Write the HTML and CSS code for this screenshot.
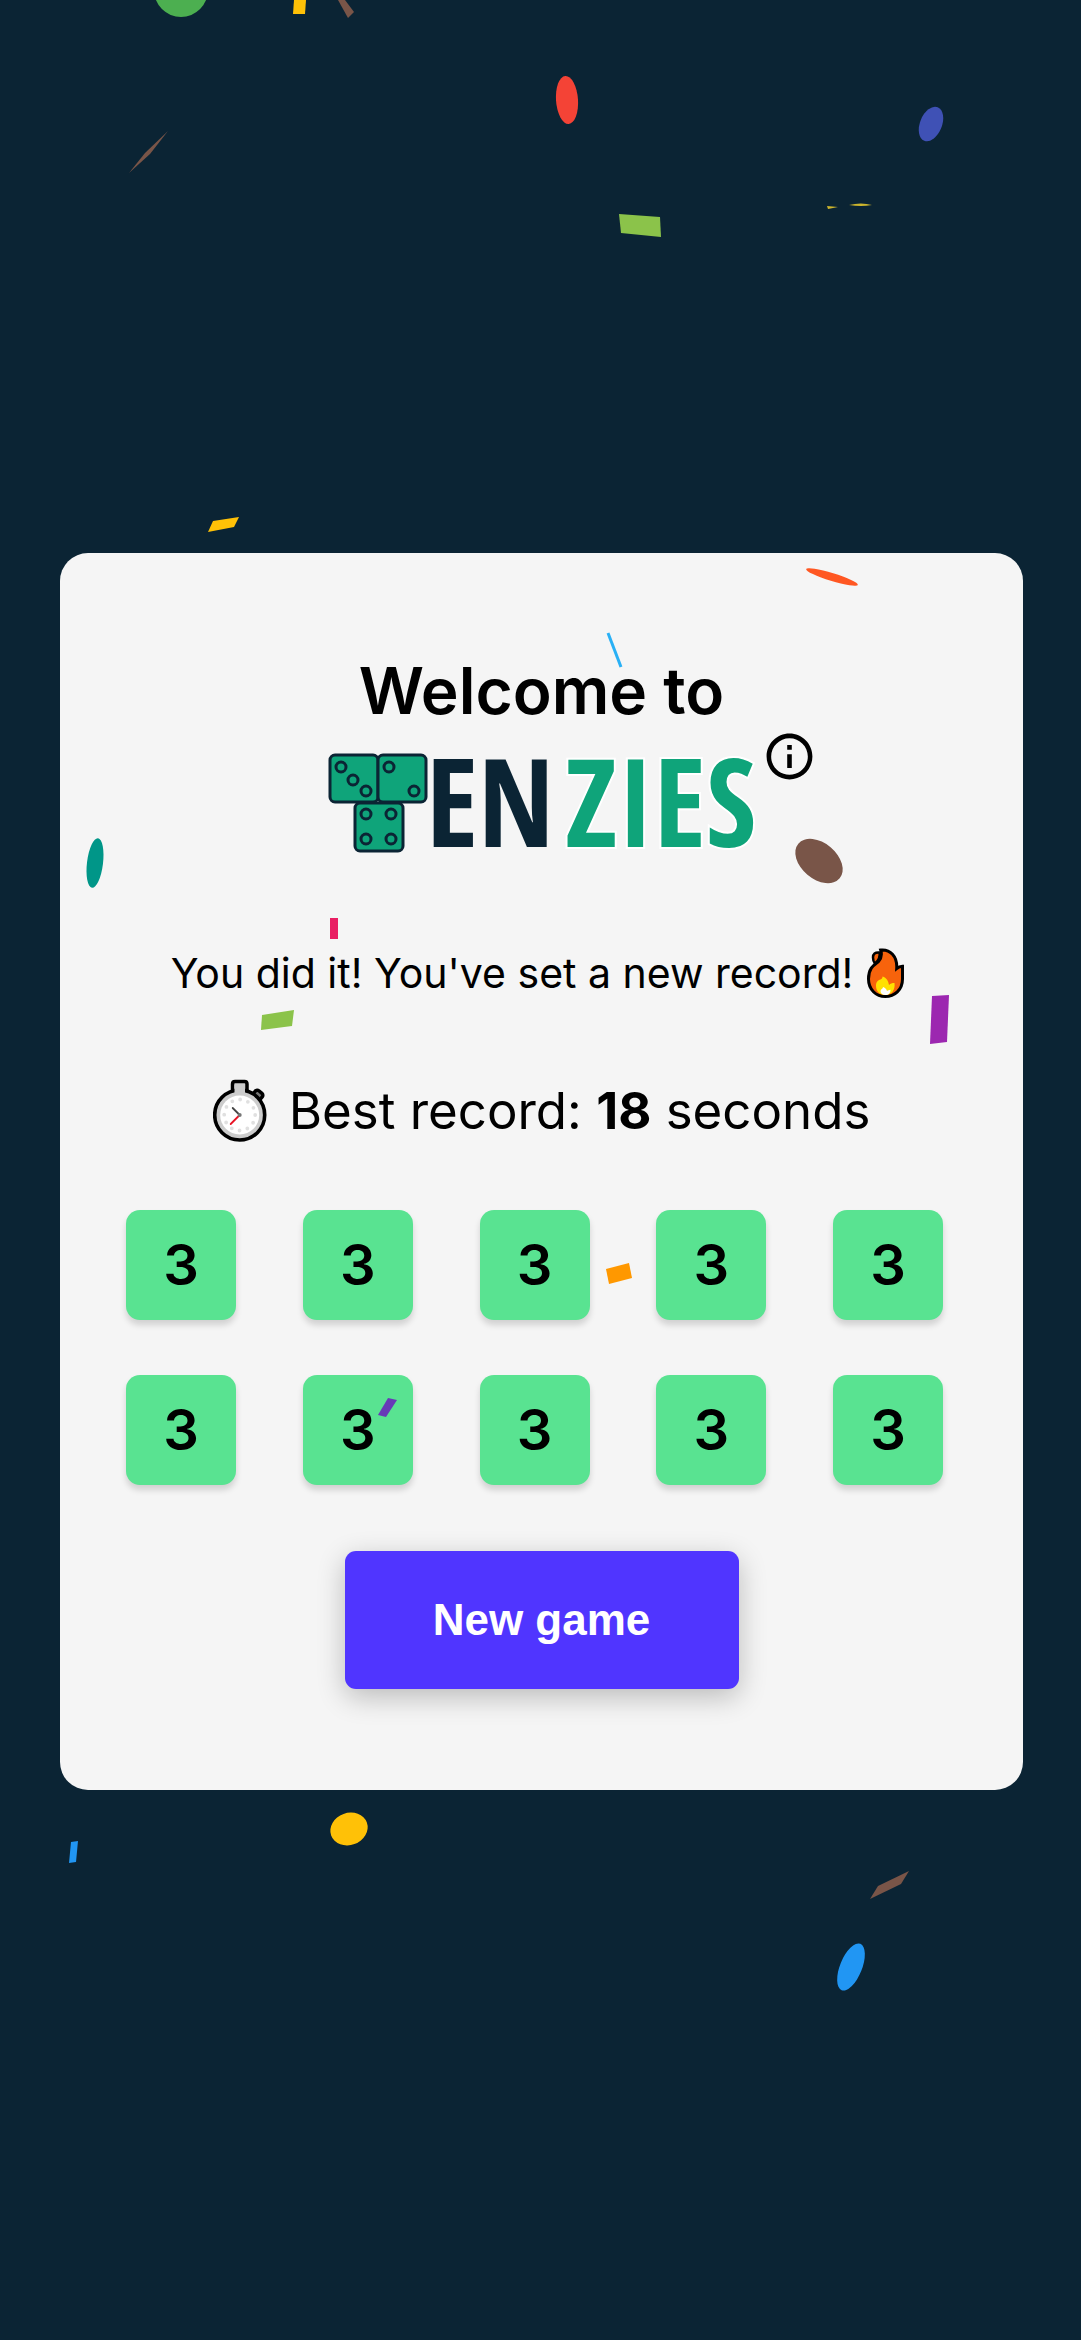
FILE: index.html
```
<!DOCTYPE html>
<html lang="en">
<head>
  <meta charset="utf-8">
  <meta name="viewport" content="width=device-width, initial-scale=1">
  <title>Tenzies</title>
  <link rel="stylesheet" href="styles.css">
</head>
<body>
  <main class="card">
    <h1 class="title">Welcome to</h1>

    <div class="brand">
      <svg class="logo" viewBox="0 0 428 102" role="img" aria-label="Tenzies">
        <g class="die">
          <rect x="2" y="3" width="48" height="47" rx="5"/>
          <rect x="50" y="3" width="48" height="47" rx="5"/>
          <rect x="27" y="51" width="48" height="48" rx="5"/>
          <circle cx="13" cy="15" r="5"/>
          <circle cx="25" cy="28" r="5"/>
          <circle cx="38" cy="39" r="5"/>
          <circle cx="61" cy="15" r="5"/>
          <circle cx="86" cy="39" r="5"/>
          <circle cx="38" cy="62" r="5"/>
          <circle cx="63" cy="62" r="5"/>
          <circle cx="38" cy="87" r="5"/>
          <circle cx="63" cy="87" r="5"/>
        </g>
        <text class="word word-dark" x="98" y="95">EN</text>
        <text class="word word-green" x="237" y="95">ZIES</text>
      </svg>
      <button class="info" type="button" aria-label="How to play">
        <svg class="info-icon" viewBox="0 0 24 24" aria-hidden="true">
          <path d="M11 7h2v2h-2zm0 4h2v6h-2zm1-9C6.480 2 2 6.480 2 12s4.480 10 10 10 10-4.480 10-10S17.520 2 12 2zm0 18c-4.410 0-8-3.590-8-8s3.590-8 8-8 8 3.590 8 8-3.590 8-8 8z"/>
        </svg>
      </button>
    </div>

    <p class="message">
      <span>You did it! You've set a new record!</span>
      <svg class="flame" viewBox="0 0 37 50" aria-hidden="true">
        <path d="M13.700 2C23 1 30.500 8 29.700 20.500c2-1.500 3.500-2 5.800-2.200V31c0 11-8 17.500-17.200 17.500S1.500 41.500 1.500 31C1.500 20 7 17 11.500 13.500 14.500 10 15 6 13.700 2z" fill="#f7630c" stroke="#000" stroke-width="3"/>
        <path d="M12.500 4.500C8 4 6 6 6 9.500c0 3 .5 4.500 2 6 3-2.500 5.500-6 4.500-11z" fill="#f7630c" stroke="#000" stroke-width="2.500"/>
        <path d="M15.500 28.500c4 1 6 5 6.500 8.500 1.500-1.500 3-2 5.500-2 1 7-3 12-9 12s-9.500-4-9.500-9c0-4 2-6 4.500-6.500 1.500-.8 2-1.500 2-3z" fill="#ffe100"/>
        <path d="M16 39c2.500.5 3.500 2.500 4 4 1-.8 2-1.200 3.500-1.300 0 3.300-2 5.300-5 5.300s-5-1.500-5-4c0-2 2.500-2 2.500-4z" fill="#fff"/>
      </svg>
    </p>

    <p class="record">
      <svg class="stopwatch" viewBox="0 0 54 64" aria-hidden="true">
        <path d="M19.500 14V5q0-2.500 2.500-2.500h9.500Q34 2.500 34 5v9z" fill="#ccc" stroke="#000" stroke-width="3.500"/>
        <rect x="40" y="12" width="9" height="9" rx="2.500" transform="rotate(40 44.500 16.500)" fill="#767676" stroke="#000" stroke-width="3.500"/>
        <circle cx="26.700" cy="36" r="25" fill="#ccc" stroke="#000" stroke-width="3.600"/>
        <path d="M21.500 6h10.500v8H21.500z" fill="#ccc"/>
        <circle cx="26.700" cy="36" r="19.500" fill="#fff"/>
        <circle cx="26.700" cy="36" r="15.500" fill="none" stroke="#e0e0e0" stroke-width="3.800" stroke-linecap="round" stroke-dasharray="0 8.115"/>
        <path d="M26.700 36l-7-7" stroke="#444" stroke-width="1.800" stroke-linecap="round"/>
        <path d="M26.700 36l-9 9" stroke="#e81224" stroke-width="1.800" stroke-linecap="round"/>
        <circle cx="26.700" cy="36" r="2" fill="#767676"/>
      </svg>
      <span>Best record: <b>18</b> seconds</span>
    </p>

    <div class="dice">
      <button class="tile" type="button">3</button>
      <button class="tile" type="button">3</button>
      <button class="tile" type="button">3</button>
      <button class="tile" type="button">3</button>
      <button class="tile" type="button">3</button>
      <button class="tile" type="button">3</button>
      <button class="tile" type="button">3</button>
      <button class="tile" type="button">3</button>
      <button class="tile" type="button">3</button>
      <button class="tile" type="button">3</button>
    </div>

    <button class="new-game" type="button">New game</button>
  </main>

  <svg class="confetti" aria-hidden="true">
    <circle cx="181" cy="-10" r="27" fill="#4caf50"/>
    <path d="M294 0h12l-1 14h-12z" fill="#ffc107"/>
    <path d="M338 0h7l9 12-6 6z" fill="#795548"/>
    <path d="M129 173l16-20 23-22-18 23z" fill="#795548"/>
    <ellipse cx="567" cy="100" rx="11" ry="24" transform="rotate(-4 567 100)" fill="#f44336"/>
    <ellipse cx="931" cy="124" rx="11" ry="18" transform="rotate(22 931 124)" fill="#3f51b5"/>
    <path d="M619 214l41 3 1 20-40-4z" fill="#8bc34a"/>
    <path d="M827 206l11 1-10 2zM849 205q12-3 23 0-11 2-23 0z" fill="#cdb52d"/>
    <path d="M208 532l5-11 26-4-5 10z" fill="#ffc107"/>
    <ellipse cx="832" cy="577" rx="27" ry="4" transform="rotate(17 832 577)" fill="#ff5722"/>
    <path d="M608 633l13 34" stroke="#29b0f5" stroke-width="3"/>
    <ellipse cx="95" cy="863" rx="8" ry="25" transform="rotate(7 95 863)" fill="#009688"/>
    <ellipse cx="819" cy="861" rx="27" ry="18" transform="rotate(40 819 861)" fill="#795548"/>
    <path d="M330 918h8v21h-8z" fill="#e91e63"/>
    <path d="M262 1015l32-5-2 16-31 4z" fill="#8bc34a"/>
    <path d="M932 996l17-1-2 47-17 2z" fill="#9c27b0"/>
    <path d="M606 1269l23-6 3 15-23 6z" fill="#ff9800"/>
    <path d="M388 1398l9 2-11 17-8-2z" fill="#673ab7"/>
    <ellipse cx="349" cy="1829" rx="19" ry="16" transform="rotate(-20 349 1829)" fill="#ffc107"/>
    <path d="M71 1842l7-1-2 21-7 1z" fill="#2196f3"/>
    <path d="M870 1899l8-13 31-15-8 13z" fill="#795548"/>
    <ellipse cx="851" cy="1967" rx="11" ry="25" transform="rotate(22 851 1967)" fill="#2196f3"/>
  </svg>
</body>
</html>
```
FILE: styles.css
```
* {
  box-sizing: border-box;
}

body {
  position: relative;
  min-height: 100vh;
  margin: 0;
  padding: 2px 58px 0 60px;
  display: flex;
  align-items: center;
  background: #0b2434;
  color: #000;
  font-family: Inter, "Liberation Sans", sans-serif;
}

button {
  border: 0;
  color: inherit;
  font-family: inherit;
  cursor: pointer;
}

.card {
  flex: 1;
  display: flex;
  flex-direction: column;
  align-items: center;
  padding: 106px 66px 101px;
  border-radius: 28px;
  background: #f5f5f5;
}

.title {
  margin: 0;
  font-size: 64px;
  line-height: 64px;
  font-weight: 600;
}

.brand {
  position: relative;
  margin-top: 29px;
}

.logo {
  display: block;
  width: 428px;
  height: 102px;
  overflow: visible;
}

.die {
  fill: #0fa47a;
  stroke: #0b2434;
  stroke-width: 3px;
}

.word {
  font-family: "Open Sans Condensed", "Roboto Condensed", sans-serif;
  font-size: 122px;
  font-weight: 700;
}

.word-dark {
  fill: #0b2434;
}

.word-green {
  fill: #0fa47a;
  stroke: #fff;
  stroke-width: 4px;
  paint-order: stroke;
}

/* Sits just off the logo's top right corner */
.info {
  position: absolute;
  left: 100%;
  top: -23px;
  margin-left: 6px;
  padding: 0;
  background: none;
}

.info-icon {
  display: block;
  width: 55px;
  height: 55px;
}

.message {
  display: flex;
  align-items: center;
  gap: 14px;
  margin: 94px 0 0;
  padding-right: 8px;
  font-size: 41px;
  line-height: 50px;
}

.flame {
  width: 37px;
  height: 50px;
}

.record {
  display: flex;
  align-items: center;
  gap: 22px;
  margin: 81px 0 0;
  font-size: 51px;
  line-height: 62px;
}

.stopwatch {
  width: 54px;
  height: 64px;
}

.dice {
  align-self: stretch;
  display: grid;
  grid-template-columns: repeat(5, 110px);
  justify-content: space-between;
  row-gap: 55px;
  margin-top: 67px;
  padding-right: 14px;
}

.tile {
  height: 110px;
  padding: 0;
  border-radius: 14px;
  background: #59e391;
  box-shadow: 0 5px 6px rgba(0, 0, 0, 0.15);
  font-size: 56px;
  font-weight: 600;
}

.new-game {
  width: 394px;
  height: 138px;
  margin-top: 66px;
  border-radius: 11px;
  background: #5035ff;
  box-shadow: 0 8px 28px rgba(0, 0, 0, 0.24);
  color: #fff;
  font-family: "Liberation Sans", Arial, sans-serif;
  font-size: 44px;
  font-weight: 700;
}

.confetti {
  position: absolute;
  inset: 0;
  width: 100%;
  height: 100%;
  pointer-events: none;
}
```
